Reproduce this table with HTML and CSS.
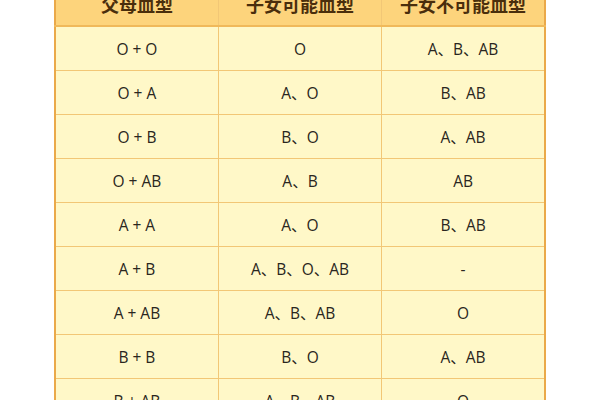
FILE: index.html
```html
<!DOCTYPE html>
<html>
<head>
<meta charset="utf-8">
<link rel="stylesheet" href="styles.css">
</head>
<body>
<div class="wrap">
<table class="blood">
<thead>
<tr><th>父母血型</th><th>子女可能血型</th><th>子女不可能血型</th></tr>
</thead>
<tbody>
<tr><td>O + O</td><td>O</td><td>A、B、AB</td></tr>
<tr><td>O + A</td><td>A、O</td><td>B、AB</td></tr>
<tr><td>O + B</td><td>B、O</td><td>A、AB</td></tr>
<tr><td>O + AB</td><td>A、B</td><td>AB</td></tr>
<tr><td>A + A</td><td>A、O</td><td>B、AB</td></tr>
<tr><td>A + B</td><td>A、B、O、AB</td><td>-</td></tr>
<tr><td>A + AB</td><td>A、B、AB</td><td>O</td></tr>
<tr><td>B + B</td><td>B、O</td><td>A、AB</td></tr>
<tr><td>B + AB</td><td>A、B、AB</td><td>O</td></tr>
</tbody>
</table>
</div>
</body>
</html>
```
FILE: styles.css
```css
html, body {
  margin: 0;
  padding: 0;
  background: #ffffff;
  overflow: hidden;
}
.wrap {
  display: flex;
  justify-content: flex-start;
  padding-left: 54px;
  margin-top: -20px;
}
.blood {
  border-collapse: collapse;
  width: 492px;
  table-layout: fixed;
  border: 2px solid #eaa94a;
}
.blood th, .blood td {
  border: 1px solid #f2c776;
  text-align: center;
  vertical-align: middle;
  height: 43px;
  padding: 0;
}
.blood th {
  background: #fdd47c;
  color: #4a2e0c;
  font-family: "Noto Sans CJK SC", serif;
  font-weight: 700;
  font-size: 18px;
  border-bottom: 2px solid #f0b95a;
}
.blood td {
  background: #fff8c8;
  color: #2a2620;
  font-family: "Open Sans", "Noto Sans CJK SC", sans-serif;
  font-size: 15.5px;
}
```
